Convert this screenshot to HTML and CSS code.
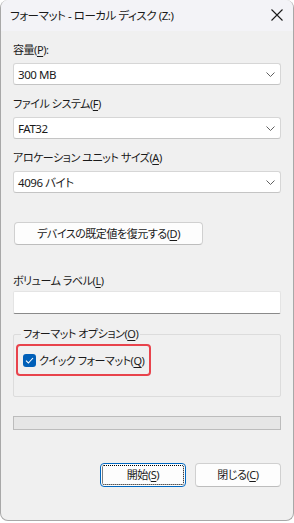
FILE: index.html
```html
<!DOCTYPE html>
<html>
<head>
  <title>フォーマット - ローカル ディスク (Z:)</title>
  <link rel="stylesheet" href="styles.css">
</head>
<body>
  <div class="window">
    <div class="titlebar">
      <span class="title">フォーマット - ローカル ディスク (Z:)</span>
      <svg class="close" width="12" height="12" viewBox="0 0 12 12">
        <path d="M0.5 0.5 L11.5 11.5 M11.5 0.5 L0.5 11.5" stroke="#1a1a1a" stroke-width="1.1" fill="none"/>
      </svg>
    </div>
    <div class="content">
      <div class="field">
        <div class="label">容量(<u>P</u>):</div>
        <div class="select">
          <span>300 MB</span>
          <svg class="chevron" width="9" height="5" viewBox="0 0 9 5"><path d="M0.5 0.5 L4.5 4.5 L8.5 0.5" stroke="#606060" fill="none"/></svg>
        </div>
      </div>
      <div class="field">
        <div class="label">ファイル システム(<u>F</u>)</div>
        <div class="select">
          <span>FAT32</span>
          <svg class="chevron" width="9" height="5" viewBox="0 0 9 5"><path d="M0.5 0.5 L4.5 4.5 L8.5 0.5" stroke="#606060" fill="none"/></svg>
        </div>
      </div>
      <div class="field">
        <div class="label">アロケーション ユニット サイズ(<u>A</u>)</div>
        <div class="select">
          <span>4096 バイト</span>
          <svg class="chevron" width="9" height="5" viewBox="0 0 9 5"><path d="M0.5 0.5 L4.5 4.5 L8.5 0.5" stroke="#606060" fill="none"/></svg>
        </div>
      </div>

      <button class="btn restore">デバイスの既定値を復元する(<u>D</u>)</button>

      <div class="label volume">ボリューム ラベル(<u>L</u>)</div>
      <div class="textbox"></div>

      <fieldset class="options">
        <legend>フォーマット オプション(<u>O</u>)</legend>
        <div class="highlight">
          <span class="check">
            <svg width="9" height="7" viewBox="0 0 9 7"><path d="M1 3.6 L3.4 6 L8 1" stroke="#fff" stroke-width="1.1" fill="none"/></svg>
          </span>
          <span class="quick">クイック フォーマット(<u>Q</u>)</span>
        </div>
      </fieldset>

      <div class="progress"></div>

      <div class="footer">
        <button class="btn default">開始(<u>S</u>)</button>
        <button class="btn">閉じる(<u>C</u>)</button>
      </div>
    </div>
  </div>
</body>
</html>
```

FILE: styles.css
```css
* {
  box-sizing: border-box;
}
body {
  margin: 0;
  background: #ffffff;
  font-family: "Noto Sans", "Noto Sans CJK JP", sans-serif;
  font-size: 11px;
  letter-spacing: -0.45px;
  font-feature-settings: "palt";
  color: #1a1a1a;
}
u {
  text-decoration-thickness: 1px;
  text-underline-offset: 2px;
}
.window {
  width: 294px;
  height: 521px;
  background: #f0f0f0;
  border: 1px solid #a8a8a8;
  border-top: 0;
  border-radius: 8px;
  overflow: hidden;
}
.titlebar {
  height: 31px;
  background: #f3f3f7;
  display: flex;
  align-items: center;
  justify-content: space-between;
  padding: 0 10px 0 9px;
}
.title {
  line-height: 16px;
  font-size: 11.5px;
}
.close {
  margin-top: -1px;
}
.content {
  padding: 11px 12px 0 12px;
}
.label {
  line-height: 16px;
  height: 16px;
  white-space: nowrap;
}
.field {
  margin-bottom: 11px;
}
.select {
  margin-top: 5px;
  height: 22px;
  background: #ffffff;
  border: 1px solid #d6d6d6;
  border-bottom-color: #c4c4c4;
  border-radius: 3px;
  display: flex;
  align-items: center;
  justify-content: space-between;
  padding: 0 5px 0 4px;
  font-size: 11.5px;
}
.chevron {
  margin-top: 1px;
}
.btn {
  font-family: inherit;
  font-size: inherit;
  letter-spacing: inherit;
  font-feature-settings: "palt";
  color: #1a1a1a;
  background: #fdfdfd;
  border: 1px solid #d0d0d0;
  border-bottom-color: #bdbdbd;
  border-radius: 4px;
  height: 24px;
  padding: 0;
  line-height: 16px;
  white-space: nowrap;
}
.restore {
  display: block;
  width: 189px;
  height: 23px;
  margin: 29px 0 0 1px;
}
.volume {
  margin-top: 28px;
}
.textbox {
  margin-top: 2px;
  height: 23px;
  background: #ffffff;
  border: 1px solid #e4e4e4;
  border-bottom: 1px solid #8a8a8a;
  border-radius: 2px;
}
.options {
  margin: 12px 0 0 0;
  padding: 0 0 20px 0;
  border: 1px solid #dcdcdc;
  border-radius: 2px;
  min-width: 0;
}
.options legend {
  margin-left: 7px;
  padding: 0 2px;
  line-height: 16px;
}
.highlight {
  margin: 2px 0 0 2px;
  width: 135px;
  height: 32px;
  border: 2px solid #e8434c;
  border-radius: 4px;
  display: flex;
  align-items: center;
  gap: 3px;
  padding-left: 5px;
  white-space: nowrap;
}
.check {
  flex: none;
  width: 13px;
  height: 13px;
  background: #005fb8;
  border-radius: 3px;
  display: flex;
  align-items: center;
  justify-content: center;
}
.progress {
  margin-top: 19px;
  height: 14px;
  background: #e6e6e6;
  border: 1px solid #bcbcbc;
}
.footer {
  margin-top: 33px;
  display: flex;
  justify-content: flex-end;
  gap: 9px;
}
.footer .btn {
  width: 86px;
}
.default {
  border: 1px solid #0067c0;
  outline: 1px dotted #000000;
  outline-offset: -3px;
}
```
